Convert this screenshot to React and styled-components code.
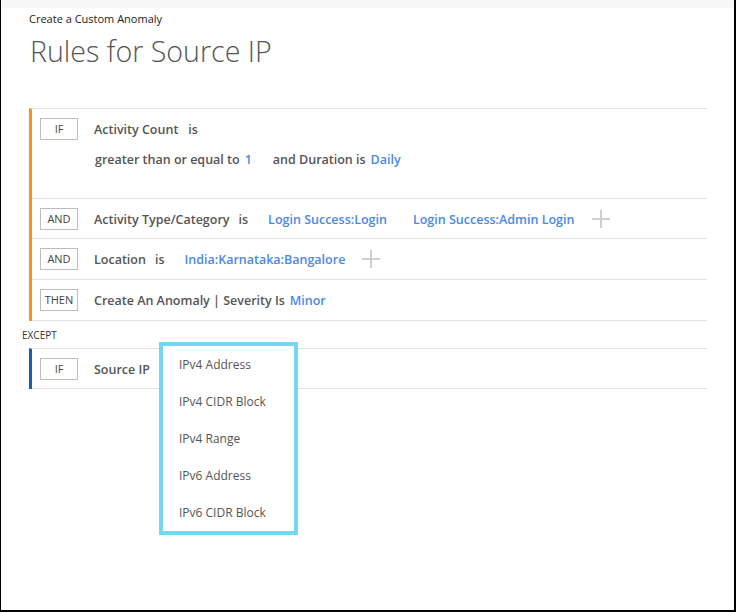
import React from "react";
import styled, { createGlobalStyle } from "styled-components";

const Global = createGlobalStyle`
  html, body { margin: 0; padding: 0; background: #fff; }
  body { font-family: "Open Sans", "Noto Sans", sans-serif; }
  * { box-sizing: border-box; }
`;

const Frame = styled.div`
  position: relative;
  width: 736px;
  height: 612px;
  background: #fff;
  border-left: 1px solid #000;
  border-right: 2px solid #000;
  border-bottom: 2px solid #000;
  overflow: hidden;
`;

const TopBand = styled.div`
  height: 8px;
  background: #f7f7f7;
`;

const Header = styled.div`
  padding-left: 28px;
  padding-top: 3px;
`;

const Crumb = styled.div`
  font-size: 11px;
  line-height: 15px;
  color: #222;
`;

const Title = styled.h1`
  margin: 7px 0 0 1px;
  font-size: 28.6px;
  line-height: 36px;
  font-weight: 300;
  color: #555;
`;

const Group = styled.div`
  margin-left: 28px;
  width: 678px;
  border-left: 3px solid ${(p) => p.$accent};
  border-top: 1px solid #e3e3e3;
  margin-top: ${(p) => p.$top}px;
`;

const Row = styled.div`
  display: flex;
  align-items: flex-start;
  padding: 9px 0 ${(p) => p.$bottom ?? 9}px 8px;
  border-bottom: 1px solid #e3e3e3;
`;

const Keyword = styled.div`
  flex: none;
  width: 38px;
  height: 22px;
  border: 1px solid #bdbdbd;
  font-size: 11px;
  line-height: 20px;
  text-align: center;
  color: #444;
  margin-right: 16px;
`;

const Lines = styled.div`
  display: flex;
  flex-direction: column;
  gap: 8px;
`;

const Line = styled.div`
  display: flex;
  align-items: center;
  height: 22px;
  font-size: 12.5px;
  font-weight: 600;
  color: #555;
  white-space: nowrap;
`;

const Text = styled.span`
  margin-right: ${(p) => p.$gap || 0}px;
  margin-left: ${(p) => p.$lead || 0}px;
`;

const Link = styled.span`
  color: #4a88ec;
  margin-right: ${(p) => p.$gap || 0}px;
`;

const Plus = styled.span`
  position: relative;
  display: inline-block;
  width: 18px;
  height: 18px;
  &::before, &::after {
    content: "";
    position: absolute;
    background: #cfcfcf;
  }
  &::before { left: 0; right: 0; top: 8px; height: 1.5px; }
  &::after { top: 0; bottom: 0; left: 8px; width: 1.5px; }
`;

const Except = styled.div`
  margin: 7px 0 0 21px;
  font-size: 10px;
  line-height: 14px;
  color: #333;
`;

const Menu = styled.ul`
  position: absolute;
  left: 158px;
  top: 342px;
  width: 139px;
  margin: 0;
  padding: 0;
  list-style: none;
  background: #fff;
  border: 4px solid #74d8f4;
`;

const Item = styled.li`
  height: 37px;
  line-height: 37px;
  padding-left: 16px;
  font-size: 12px;
  color: #555;
`;

export default function App() {
  const items = [
    "IPv4 Address",
    "IPv4 CIDR Block",
    "IPv4 Range",
    "IPv6 Address",
    "IPv6 CIDR Block",
  ];
  return (
    <Frame>
      <Global />
      <TopBand />
      <Header>
        <Crumb>Create a Custom Anomaly</Crumb>
        <Title>Rules for Source IP</Title>
      </Header>
      <Group $accent="#f7931e" $top={39}>
        <Row $bottom={28}>
          <Keyword>IF</Keyword>
          <Lines>
            <Line>
              <Text $gap={10}>Activity Count</Text>
              <Text>is</Text>
            </Line>
            <Line>
              <Text $lead={1} $gap={5}>greater than or equal to</Text>
              <Link $gap={21}>1</Link>
              <Text $gap={5}>and Duration is</Text>
              <Link>Daily</Link>
            </Line>
          </Lines>
        </Row>
        <Row $bottom={8}>
          <Keyword>AND</Keyword>
          <Line>
            <Text $gap={9}>Activity Type/Category</Text>
            <Text $gap={20}>is</Text>
            <Link $gap={26}>Login Success:Login</Link>
            <Link $gap={18}>Login Success:Admin Login</Link>
            <Plus />
          </Line>
        </Row>
        <Row>
          <Keyword>AND</Keyword>
          <Line>
            <Text $gap={9}>Location</Text>
            <Text $gap={20}>is</Text>
            <Link $gap={17}>India:Karnataka:Bangalore</Link>
            <Plus />
          </Line>
        </Row>
        <Row>
          <Keyword>THEN</Keyword>
          <Line>
            <Text $gap={5}>Create An Anomaly | Severity Is</Text>
            <Link>Minor</Link>
          </Line>
        </Row>
      </Group>
      <Except>EXCEPT</Except>
      <Group $accent="#1a5fae" $top={6}>
        <Row $bottom={8}>
          <Keyword>IF</Keyword>
          <Line>
            <Text>Source IP</Text>
          </Line>
        </Row>
      </Group>
      <Menu>
        {items.map((t) => (
          <Item key={t}>{t}</Item>
        ))}
      </Menu>
    </Frame>
  );
}
